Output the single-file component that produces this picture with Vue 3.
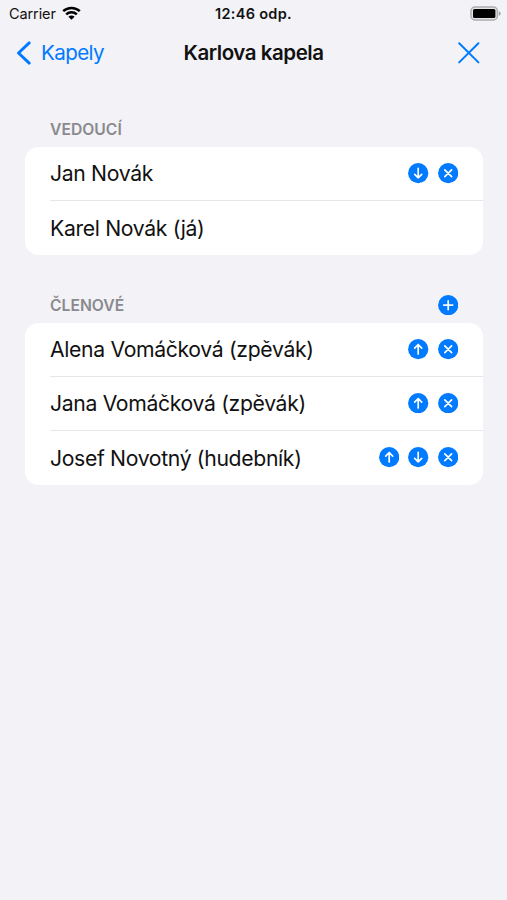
<script setup>
import { h } from 'vue'

const glyphs = {
  up: 'M10.2 15V5.6M6.7 9.1l3.5-3.6 3.5 3.6',
  down: 'M10.2 5.4v9.4M6.7 11.3l3.5 3.6 3.5-3.6',
  remove: 'M6.8 6.8l6.8 6.8M13.6 6.8l-6.8 6.8',
  add: 'M10.2 5.8v8.8M5.8 10.2h8.8',
}

const labels = { up: 'Nahoru', down: 'Dolů', remove: 'Odebrat', add: 'Přidat' }

const CircleIcon = (props) =>
  h('svg', { viewBox: '0 0 20.4 20.4', width: 20.4, height: 20.4, 'aria-hidden': true }, [
    h('circle', { cx: 10.2, cy: 10.2, r: 10.1, fill: '#007aff' }),
    h('path', {
      d: glyphs[props.kind],
      fill: 'none',
      stroke: '#fff',
      'stroke-width': 1.7,
      'stroke-linecap': 'round',
      'stroke-linejoin': 'round',
    }),
  ])
CircleIcon.props = ['kind']

const sections = [
  {
    title: 'VEDOUCÍ',
    actions: [],
    rows: [
      { name: 'Jan Novák', actions: ['down', 'remove'] },
      { name: 'Karel Novák (já)', actions: [] },
    ],
  },
  {
    title: 'ČLENOVÉ',
    actions: ['add'],
    rows: [
      { name: 'Alena Vomáčková (zpěvák)', actions: ['up', 'remove'] },
      { name: 'Jana Vomáčková (zpěvák)', actions: ['up', 'remove'] },
      { name: 'Josef Novotný (hudebník)', actions: ['up', 'down', 'remove'] },
    ],
  },
]
</script>

<template>
  <div class="screen">
    <div class="status">
      <div class="carrier">
        <span>Carrier</span>
        <svg width="19" height="15" viewBox="0 0 19 15">
          <g fill="none" stroke="#000" stroke-width="2.5">
            <path d="M1.2 5.2C5.9.8 13.1.8 17.8 5.2" />
            <path d="M4.2 8.4c3-2.8 7.6-2.8 10.6 0" />
          </g>
          <path d="M6.4 10.7c1.8-1.6 4.4-1.6 6.2 0L9.5 13.8z" />
        </svg>
      </div>
      <span class="time">12:46 odp.</span>
      <svg class="battery" width="32" height="16" viewBox="0 0 32 16">
        <rect x="1" y="1" width="26.4" height="13" rx="4" fill="#e4e4e8" stroke="#adadb0" stroke-width="1.5" />
        <rect x="3" y="3" width="22.4" height="9" rx="1.6" />
        <path d="M28.8 5.2c2.6 .9 2.6 3.7 0 4.6z" fill="#a5a5a8" />
      </svg>
    </div>

    <header class="nav">
      <button class="back">
        <svg width="16" height="24" viewBox="0 0 16 24">
          <path d="M13.2 1.9 2.5 12l10.7 10.1" fill="none" stroke="#007aff" stroke-width="2.9" stroke-linecap="round" stroke-linejoin="round" />
        </svg>
        <span>Kapely</span>
      </button>
      <h1>Karlova kapela</h1>
      <button class="close" aria-label="Zavřít">
        <svg width="22" height="22" viewBox="0 0 22 22">
          <path d="M1.2 1.2l19.2 19.2M20.4 1.2 1.2 20.4" fill="none" stroke="#007aff" stroke-width="2" stroke-linecap="round" />
        </svg>
      </button>
    </header>

    <main>
      <section v-for="section in sections" :key="section.title">
        <div class="heading">
          <h2>{{ section.title }}</h2>
          <button v-for="action in section.actions" :key="action" :aria-label="labels[action]">
            <CircleIcon :kind="action" />
          </button>
        </div>
        <ul class="card">
          <li v-for="row in section.rows" :key="row.name">
            <span class="name">{{ row.name }}</span>
            <div class="actions">
              <button v-for="action in row.actions" :key="action" :aria-label="labels[action]">
                <CircleIcon :kind="action" />
              </button>
            </div>
          </li>
        </ul>
      </section>
    </main>
  </div>
</template>

<style>
body {
  background: #f2f2f7;
}
</style>

<style scoped>
.screen {
  min-height: 900px;
  box-sizing: border-box;
  background: #f2f2f7;
  color: #111;
  font-family: Inter, "Liberation Sans", sans-serif;
}

button {
  display: flex;
  align-items: center;
  padding: 0;
  border: 0;
  background: none;
  font: inherit;
  color: #007aff;
}

svg {
  display: block;
  flex: none;
}

.status {
  display: grid;
  grid-template-columns: 1fr auto 1fr;
  align-items: center;
  height: 27px;
  padding: 0 6px;
  font-size: 14.5px;
}

.carrier {
  display: flex;
  align-items: center;
  gap: 6px;
  padding-left: 3px;
  letter-spacing: -0.1px;
}

.time {
  font-weight: 600;
  letter-spacing: 0.3px;
}

.battery {
  justify-self: end;
  margin-right: -1px;
}

.nav {
  display: grid;
  grid-template-columns: 1fr auto 1fr;
  align-items: center;
  height: 51px;
  padding: 0 16px;
}

.back {
  gap: 9px;
  font-size: 20.6px;
  letter-spacing: -0.6px;
}

h1 {
  margin: 0;
  font-size: 20.5px;
  font-weight: 600;
  letter-spacing: -0.45px;
}

.close {
  justify-self: end;
  margin-right: 11px;
}

main {
  padding: 33.4px 24.5px 0 25px;
}

.heading {
  display: flex;
  align-items: center;
  justify-content: space-between;
  height: 35.6px;
  padding: 0 24.5px 0 25px;
}

h2 {
  margin: 0;
  padding-top: 1px;
  font-size: 15.7px;
  font-weight: 600;
  color: #8a8a8e;
}

.card {
  margin: 0 0 32.6px;
  padding: 0;
  list-style: none;
  border-radius: 13.5px;
  background: #fff;
}

li {
  display: flex;
  align-items: center;
  justify-content: space-between;
  box-sizing: border-box;
  height: 53.9px;
  margin-left: 25px;
  padding-right: 24.5px;
}

li:not(:last-child) {
  border-bottom: 1px solid #e6e6e9;
}

.name {
  font-size: 21.2px;
  letter-spacing: -0.34px;
}

.actions {
  display: flex;
  gap: 9.1px;
}
</style>
